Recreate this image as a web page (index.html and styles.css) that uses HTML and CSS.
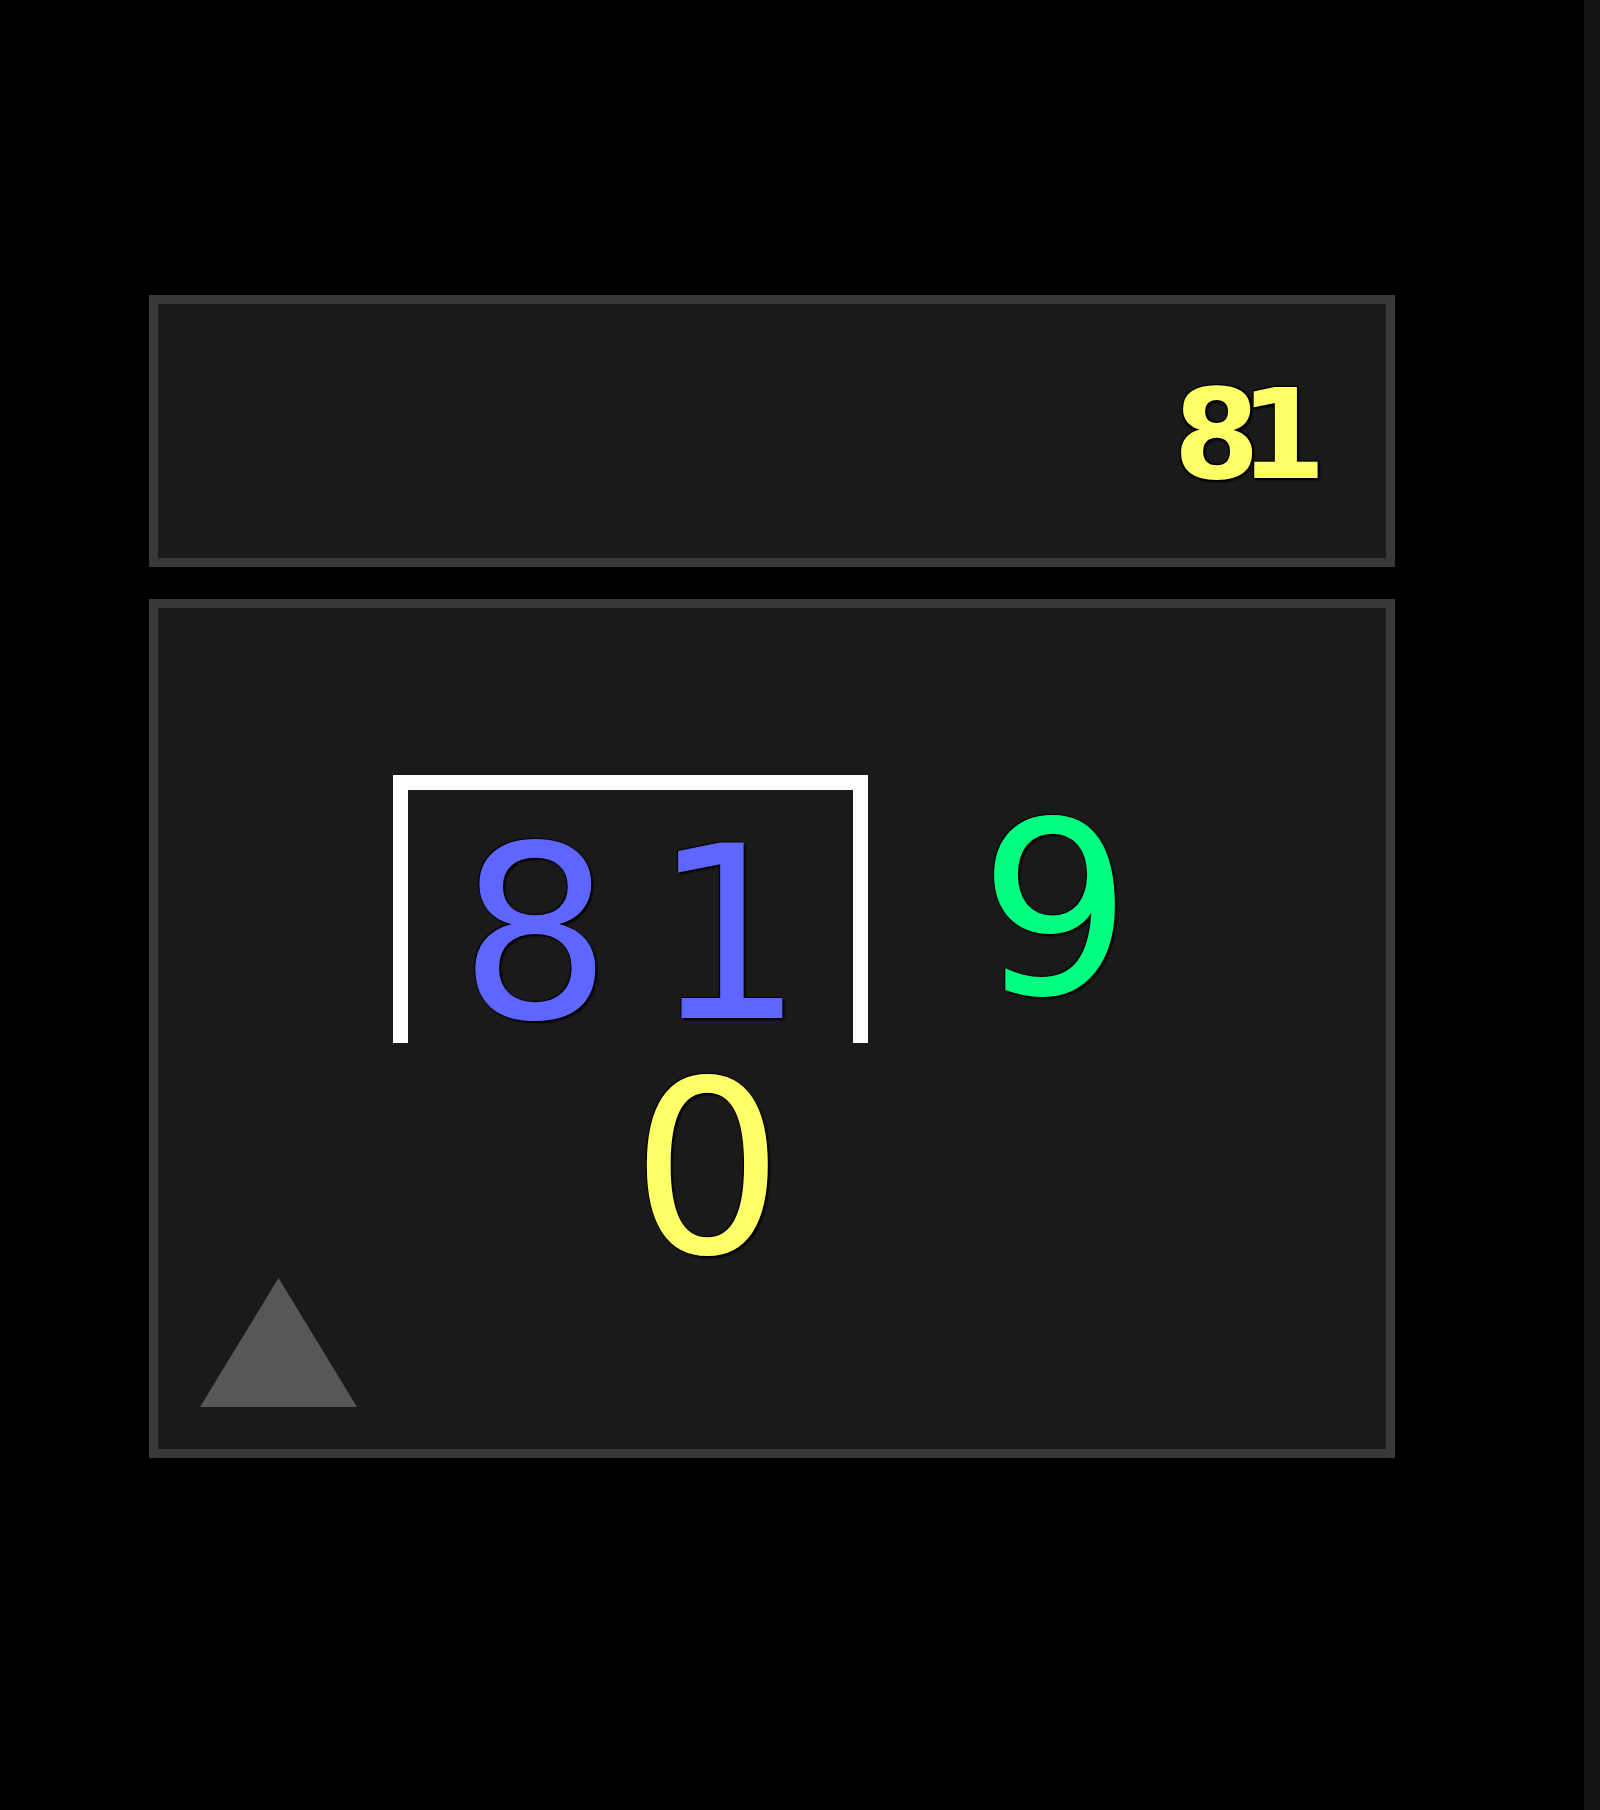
FILE: index.html
```html
<!DOCTYPE html>
<html lang="en">
<head>
<meta charset="utf-8">
<title>Division</title>
<link rel="stylesheet" href="styles.css">
</head>
<body>
<div class="app">
  <main class="main">
    <div class="display">
      <span class="display-value">81</span>
    </div>
    <div class="work">
      <div class="row">
        <div class="bracket">
          <span class="digit dividend">8</span>
          <span class="digit dividend">1</span>
        </div>
        <span class="digit divisor">9</span>
      </div>
      <div class="digit remainder">0</div>
      <button class="toggle" type="button" aria-label="Toggle">
        <svg width="157" height="129" viewBox="0 0 157 129"><polygon points="78.5,0 157,129 0,129" fill="#575757"/></svg>
      </button>
    </div>
  </main>
  <div class="scrollbar"></div>
</div>
</body>
</html>
```
FILE: styles.css
```css
html, body {
  margin: 0;
  padding: 0;
  background: #000;
}

.app {
  display: flex;
  width: 1600px;
  height: 1810px;
}

.main {
  flex: 1;
  padding: 295px 0 0 149px;
  display: flex;
  flex-direction: column;
  gap: 32px;
}

.scrollbar {
  width: 16px;
  background: #141414;
}

.display {
  box-sizing: border-box;
  width: 1246px;
  height: 272px;
  background: #1a1a1a;
  border: 9px solid #383838;
  display: flex;
  align-items: center;
  justify-content: flex-end;
  padding: 8px 80px 0 0;
}

.display-value {
  font-family: "DejaVu Sans", sans-serif;
  font-weight: bold;
  font-size: 124px;
  line-height: 1;
  letter-spacing: -20px;
  color: #ffff66;
  text-shadow: 2px 2px 2px #000, -1px -1px 1px #000, 2px -1px 1px #000, -1px 2px 1px #000;
}

.work {
  position: relative;
  box-sizing: border-box;
  width: 1246px;
  height: 859px;
  background: #1a1a1a;
  border: 9px solid #383838;
  padding: 167px 0 0 235px;
}

.row {
  display: flex;
  align-items: flex-start;
}

.digit {
  font-family: "DejaVu Sans", sans-serif;
  font-size: 240px;
  line-height: 0.8;
  text-shadow: 2px 2px 2px #000, -1px -1px 1px #000;
}

.bracket {
  box-sizing: border-box;
  width: 475px;
  height: 268px;
  border: 15px solid #fff;
  border-bottom: none;
  display: flex;
  gap: 40px;
  padding: 49px 0 0 51px;
}

.dividend {
  color: #5f66ff;
}

.divisor {
  color: #00ff80;
  margin: 40px 0 0 111px;
}

.remainder {
  color: #ffff66;
  margin: 31px 0 0 238px;
}

.toggle {
  position: absolute;
  left: 42px;
  bottom: 42px;
  padding: 0;
  margin: 0;
  border: none;
  background: none;
  display: block;
  line-height: 0;
}
```
